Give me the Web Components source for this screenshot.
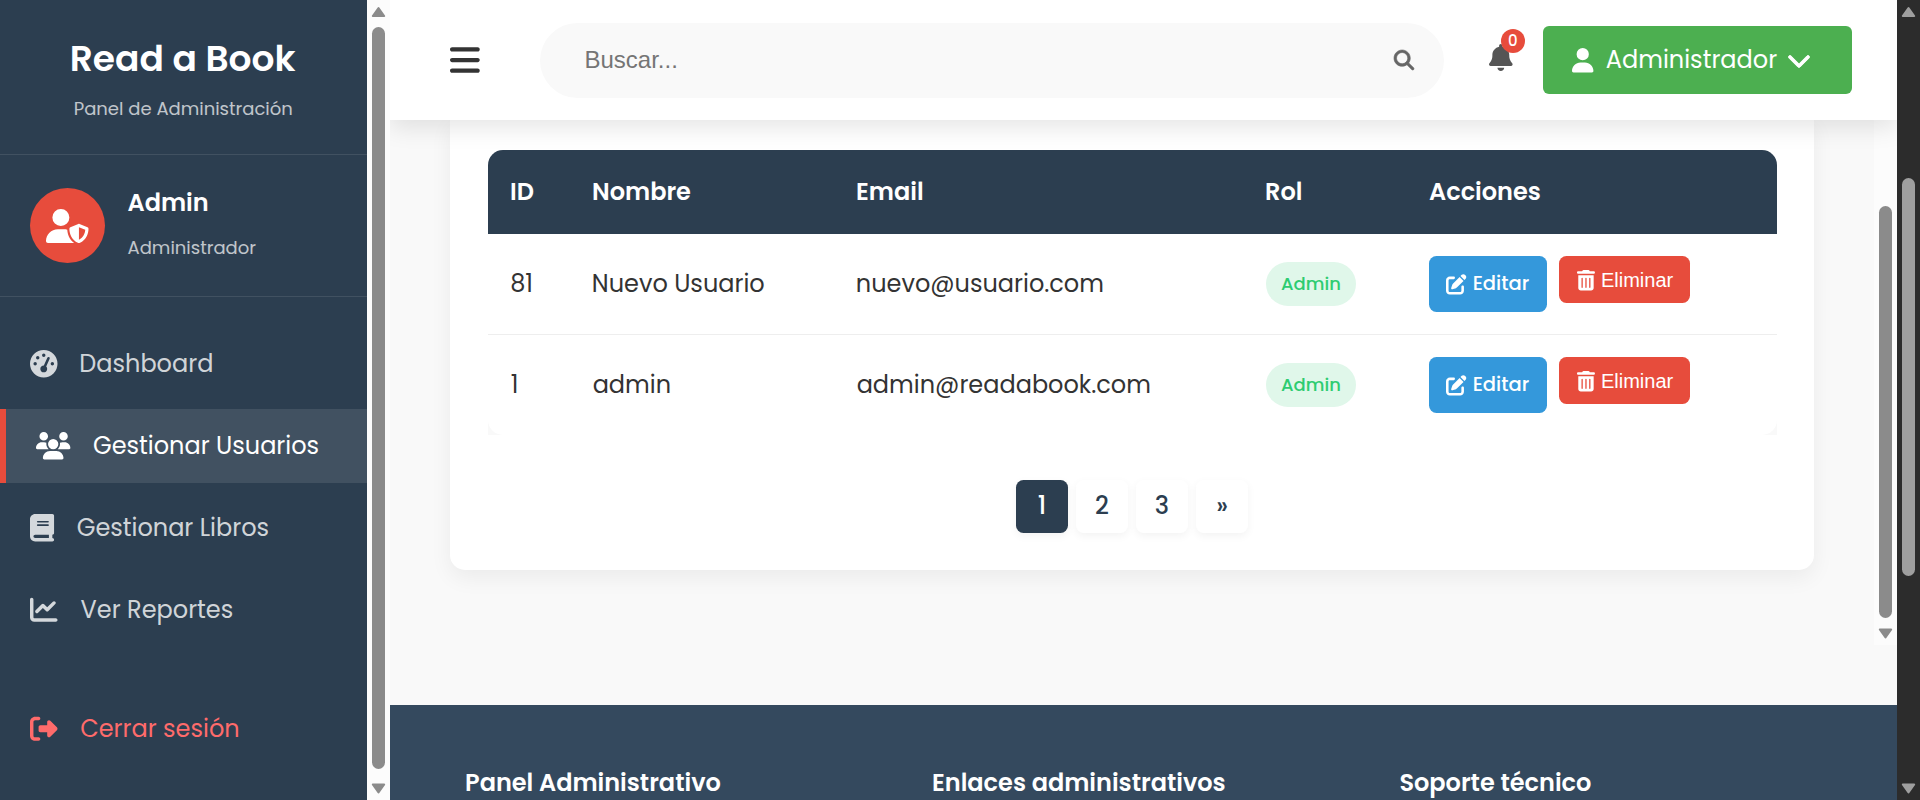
<!DOCTYPE html>
<html lang="es">
<head>
<meta charset="utf-8">
<title>Read a Book - Gestionar Usuarios</title>
<style>
html,body{margin:0;height:100%;overflow:hidden}
body{font-family:Poppins,Inter,"Open Sans",sans-serif;font-size:24px;color:#333;background:#f9f9f9}
</style>
</head>
<body>
<admin-app></admin-app>
<script>
const ICONS={
shield:[640,'M224 256A128 128 0 1 0 224 0a128 128 0 1 0 0 256zm-45.7 48C79.8 304 0 383.8 0 482.3C0 498.7 13.3 512 29.7 512H418.3c1.8 0 3.5-.2 5.3-.5c-76.3-55.1-99.8-141-103.1-200.2c-16.1-4.8-33.1-7.3-50.7-7.3H178.3zm308.8-78.3l-120 48C358 277.4 352 286.2 352 296c0 63.3 25.9 168.8 134.8 214.2c5.9 2.5 12.6 2.5 18.5 0C614.1 464.8 640 359.3 640 296c0-9.8-6-18.6-15.1-22.3l-120-48c-5.7-2.3-12.1-2.3-17.8 0zM591.4 312c-3.9 50.7-27.2 116.7-95.4 149.7V273.8L591.4 312z'],
gauge:[512,'M0 256a256 256 0 1 1 512 0A256 256 0 1 1 0 256zM288 96a32 32 0 1 0 -64 0 32 32 0 1 0 64 0zM256 416c35.3 0 64-28.7 64-64c0-17.4-6.9-33.1-18.1-44.6L366 161.7c5.3-12.1-.2-26.3-12.3-31.6s-26.3 .2-31.6 12.3L257.9 288c-.6 0-1.3 0-1.9 0c-35.3 0-64 28.7-64 64s28.7 64 64 64zM176 144a32 32 0 1 0 -64 0 32 32 0 1 0 64 0zM96 288a32 32 0 1 0 0-64 32 32 0 1 0 0 64zm352-32a32 32 0 1 0 -64 0 32 32 0 1 0 64 0z'],
users:[640,'M144 0a80 80 0 1 1 0 160A80 80 0 1 1 144 0zM512 0a80 80 0 1 1 0 160A80 80 0 1 1 512 0zM0 298.7C0 239.8 47.8 192 106.7 192h42.7c15.9 0 31 3.5 44.6 9.7c-1.3 7.2-1.9 14.7-1.9 22.3c0 38.2 16.8 72.5 43.3 96c-.2 0-.4 0-.7 0H21.3C9.6 320 0 310.4 0 298.7zM405.3 320c-.2 0-.4 0-.7 0c26.6-23.5 43.3-57.8 43.3-96c0-7.6-.7-15-1.9-22.3c13.6-6.3 28.7-9.7 44.6-9.7h42.7C592.2 192 640 239.8 640 298.7c0 11.8-9.6 21.3-21.3 21.3H405.3zM224 224a96 96 0 1 1 192 0 96 96 0 1 1 -192 0zM128 485.3C128 411.7 187.7 352 261.3 352H378.7C452.3 352 512 411.7 512 485.3c0 14.7-11.9 26.7-26.7 26.7H154.7c-14.7 0-26.7-11.9-26.7-26.7z'],
book:[448,'M96 0C43 0 0 43 0 96V416c0 53 43 96 96 96H384h32c17.7 0 32-14.3 32-32s-14.3-32-32-32V384c17.7 0 32-14.3 32-32V32c0-17.7-14.3-32-32-32H384 96zm0 384H352v64H96c-17.7 0-32-14.3-32-32s14.3-32 32-32zm32-240c0-8.8 7.2-16 16-16H336c8.8 0 16 7.2 16 16s-7.2 16-16 16H144c-8.8 0-16-7.2-16-16zm16 48H336c8.8 0 16 7.2 16 16s-7.2 16-16 16H144c-8.8 0-16-7.2-16-16s7.2-16 16-16z'],
chart:[512,'M64 64c0-17.7-14.3-32-32-32S0 46.3 0 64V400c0 44.2 35.8 80 80 80H480c17.7 0 32-14.3 32-32s-14.3-32-32-32H80c-8.8 0-16-7.2-16-16V64zm406.6 86.6c12.5-12.5 12.5-32.8 0-45.3s-32.8-12.5-45.3 0L320 210.7l-57.4-57.4c-12.5-12.5-32.8-12.5-45.3 0l-112 112c-12.5 12.5-12.5 32.8 0 45.3s32.8 12.5 45.3 0L240 221.3l57.4 57.4c12.5 12.5 32.8 12.5 45.3 0l128-128z'],
exit:[512,'M377.9 105.9L500.7 228.7c7.2 7.2 11.3 17.1 11.3 27.3s-4.1 20.1-11.3 27.3L377.9 406.1c-6.4 6.4-15 9.9-24 9.9c-18.7 0-33.9-15.2-33.9-33.9l0-62.1-128 0c-17.7 0-32-14.3-32-32l0-64c0-17.7 14.3-32 32-32l128 0 0-62.1c0-18.7 15.2-33.9 33.9-33.9c9 0 17.6 3.6 24 9.9zM160 96L96 96c-17.7 0-32 14.3-32 32l0 256c0 17.7 14.3 32 32 32l64 0c17.7 0 32 14.3 32 32s-14.3 32-32 32l-64 0c-53 0-96-43-96-96L0 128C0 75 43 32 96 32l64 0c17.7 0 32 14.3 32 32s-14.3 32-32 32z'],
bars:[448,'M0 96C0 78.3 14.3 64 32 64H416c17.7 0 32 14.3 32 32s-14.3 32-32 32H32C14.3 128 0 113.7 0 96zM0 256c0-17.7 14.3-32 32-32H416c17.7 0 32 14.3 32 32s-14.3 32-32 32H32c-17.7 0-32-14.3-32-32zM448 416c0 17.7-14.3 32-32 32H32c-17.7 0-32-14.3-32-32s14.3-32 32-32H416c17.7 0 32 14.3 32 32z'],
search:[512,'M416 208c0 45.9-14.9 88.3-40 122.7L502.6 457.4c12.5 12.5 12.5 32.8 0 45.3s-32.8 12.5-45.3 0L330.7 376c-34.4 25.2-76.8 40-122.7 40C93.1 416 0 322.9 0 208S93.1 0 208 0S416 93.1 416 208zM208 352a144 144 0 1 0 0-288 144 144 0 1 0 0 288z'],
bell:[448,'M224 0c-17.7 0-32 14.3-32 32V51.2C119 66 64 130.6 64 208v18.8c0 47-17.3 92.4-48.5 127.6l-7.4 8.3c-8.4 9.4-10.4 22.9-5.3 34.4S19.4 416 32 416H416c12.6 0 24-7.4 29.2-18.9s3.1-25-5.3-34.4l-7.4-8.3C401.3 319.2 384 273.9 384 226.8V208c0-77.4-55-142-128-156.8V32c0-17.7-14.3-32-32-32zm45.3 493.3c12-12 18.7-28.3 18.7-45.3H224 160c0 17 6.7 33.3 18.7 45.3s28.3 18.7 45.3 18.7s33.3-6.7 45.3-18.7z'],
user:[448,'M224 256A128 128 0 1 0 224 0a128 128 0 1 0 0 256zm-45.7 48C79.8 304 0 383.8 0 482.3C0 498.7 13.3 512 29.7 512H418.3c16.4 0 29.7-13.3 29.7-29.7C448 383.8 368.2 304 269.7 304H178.3z'],
chevron:[512,'M233.4 406.6c12.5 12.5 32.8 12.5 45.3 0l192-192c12.5-12.5 12.5-32.8 0-45.3s-32.8-12.5-45.3 0L256 338.7 86.6 169.4c-12.5-12.5-32.8-12.5-45.3 0s-12.5 32.8 0 45.3l192 192z'],
edit:[512,'M471.6 21.7c-21.9-21.9-57.3-21.9-79.2 0L362.3 51.7l97.9 97.9 30.1-30.1c21.9-21.9 21.9-57.3 0-79.2L471.6 21.7zm-299.2 220c-6.1 6.1-10.8 13.6-13.5 21.9l-29.6 88.8c-2.9 8.6-.6 18.1 5.8 24.6s15.9 8.7 24.6 5.8l88.8-29.6c8.2-2.7 15.7-7.4 21.9-13.5L437.7 172.3 339.7 74.3 172.4 241.7zM96 64C43 64 0 107 0 160V416c0 53 43 96 96 96H352c53 0 96-43 96-96V320c0-17.7-14.3-32-32-32s-32 14.3-32 32v96c0 17.7-14.3 32-32 32H96c-17.7 0-32-14.3-32-32V160c0-17.7 14.3-32 32-32h96c17.7 0 32-14.3 32-32s-14.3-32-32-32H96z'],
trash:[448,'M135.2 17.7C140.6 6.8 151.7 0 163.8 0H284.2c12.1 0 23.2 6.8 28.6 17.7L320 32h96c17.7 0 32 14.3 32 32s-14.3 32-32 32H32C14.3 96 0 81.7 0 64S14.3 32 32 32h96l7.2-14.3zM32 128H416V448c0 35.3-28.7 64-64 64H96c-35.3 0-64-28.7-64-64V128zm96 64c-8.8 0-16 7.2-16 16V432c0 8.8 7.2 16 16 16s16-7.2 16-16V208c0-8.8-7.2-16-16-16zm96 0c-8.8 0-16 7.2-16 16V432c0 8.8 7.2 16 16 16s16-7.2 16-16V208c0-8.8-7.2-16-16-16zm96 0c-8.8 0-16 7.2-16 16V432c0 8.8 7.2 16 16 16s16-7.2 16-16V208c0-8.8-7.2-16-16-16z']
};
function define(name,html,setup){
  customElements.define(name,class extends HTMLElement{
    connectedCallback(){
      if(this.shadowRoot)return;
      this.attachShadow({mode:'open'}).innerHTML=typeof html==='function'?html(this):html;
      if(setup)setup(this);
    }
  });
}
/* Glyph icon; size is the em height, bold thickens the strokes */
define('fa-icon',el=>{
  const [w,d]=ICONS[el.getAttribute('name')],s=+el.getAttribute('size'),b=el.getAttribute('bold')||0;
  return `<style>:host{display:block;flex:none;line-height:0}svg{display:block;fill:currentColor;stroke:currentColor;overflow:visible}</style><svg width="${w*s/512}" height="${s}" viewBox="0 0 ${w} 512" stroke-width="${b}"><path d="${d}"/></svg>`;
});
/* One line of text, optically aligned to its left edge, in a box w pixels wide */
const ctx=document.createElement('canvas').getContext('2d');
define('fit-text','<style>:host{display:block;flex:none;white-space:nowrap;line-height:36px}</style><slot></slot>',el=>{
  const cs=getComputedStyle(el),k=parseFloat(cs.fontSize)/200;
  ctx.font=`${cs.fontWeight} 200px ${cs.fontFamily}`;
  el.style.width=el.getAttribute('w')+'px';
  el.style.textIndent=ctx.measureText(el.textContent).actualBoundingBoxLeft*k+.6+'px';
});
/* Scroll bar with rounded thumb and end arrows */
define('scroll-bar',el=>`<style>
:host{display:flex;flex-direction:column;align-items:center;box-sizing:border-box;width:23px;background:var(--track,#fcfcfc);color:var(--thumb,#8b8b8b)}
svg{display:block;fill:currentColor;stroke:currentColor;stroke-width:2;stroke-linejoin:round;flex:none}
i{width:13px;border-radius:7px;background:currentColor;flex:none;margin-top:${el.getAttribute('before')}px;height:${el.getAttribute('length')}px}
.d{margin-top:auto;margin-bottom:6px}.u{margin-top:6px}
</style>${el.hasAttribute('noup')?'':'<svg class="u" width="15" height="11"><path d="M7.5 2L13.2 10H1.8z"/></svg>'}<i></i><svg class="d" width="15" height="11"><path d="M7.5 9.500L13.200 1.500H1.800z"/></svg>`);

define('nav-item',el=>`<style>
:host{display:flex;align-items:center;height:74px;margin-bottom:8px;padding-left:30px;color:rgba(255,255,255,.8);box-sizing:border-box}
:host([active]){background:rgba(255,255,255,.1);border-left:6px solid #e74c3c;color:#fff}
fa-icon{margin-right:23px}
</style><fa-icon name="${el.getAttribute('icon')}" size="27.500"></fa-icon><slot></slot>`);

define('side-bar',`<style>
:host{display:block;background:#2c3e50;color:#fff;overflow:hidden}
.brand{height:155px;box-sizing:border-box;padding:37px 0 0;border-bottom:1px solid rgba(255,255,255,.1);display:flex;flex-direction:column;align-items:center}
.brand .n{font-size:36px;font-weight:600;line-height:43px}
.brand .s{font-size:18px;margin-top:11px;opacity:.7}
.me{height:142px;box-sizing:border-box;padding-left:30px;display:flex;align-items:center;border-bottom:1px solid rgba(255,255,255,.1)}
.av{width:75px;height:75px;border-radius:50%;background:#e74c3c;display:flex;align-items:center;justify-content:center;margin-right:22.500px}
.me .n{font-weight:600;margin-bottom:9px}
.me .r{font-size:18px;opacity:.7}
nav{padding-top:30px}
.out{margin-top:45px;color:#ff6b6b}
</style>
<div class="brand"><fit-text class="n" w="224">Read a Book</fit-text><fit-text class="s" w="218">Panel de Administración</fit-text></div>
<div class="me"><div class="av"><fa-icon name="shield" size="34"></fa-icon></div><div><fit-text class="n" w="80">Admin</fit-text><fit-text class="r" w="128">Administrador</fit-text></div></div>
<nav>
<nav-item icon="gauge"><fit-text w="132">Dashboard</fit-text></nav-item>
<nav-item icon="users" active><fit-text w="225">Gestionar Usuarios</fit-text></nav-item>
<nav-item icon="book"><fit-text w="191">Gestionar Libros</fit-text></nav-item>
<nav-item icon="chart"><fit-text w="151">Ver Reportes</fit-text></nav-item>
<nav-item class="out" icon="exit"><fit-text w="158">Cerrar sesión</fit-text></nav-item>
</nav>`);

define('top-bar',`<style>
:host{display:flex;align-items:center;box-sizing:border-box;height:120px;padding:0 45px 0 60px;background:#fff;box-shadow:0 7.5px 22.5px rgba(0,0,0,.1);position:relative;z-index:2}
.search{width:904px;height:75px;margin-left:60px;box-sizing:border-box;padding:0 30px 0 46px;border-radius:38px;background:#f9f9f9;display:flex;align-items:center;justify-content:space-between;color:#757575;font:24px "Liberation Sans",Arial,sans-serif}
.search fa-icon{color:#666}
.bell{position:relative;margin-left:45px;color:#555;top:-2.5px}
.bell b{position:absolute;left:12px;top:-15px;width:24px;height:24px;border-radius:50%;background:#e74c3c;color:#fff;font-size:15px;font-weight:500;line-height:24px;text-align:center}
.user{margin-left:auto;width:309px;height:68px;box-sizing:border-box;padding-left:29px;border-radius:6px;background:#4caf50;color:#fff;display:flex;align-items:center}
.user fit-text{margin:0 11px 0 12.500px}
</style>
<fa-icon name="bars" size="34" style="color:#333"></fa-icon>
<div class="search"><fit-text w="91">Buscar...</fit-text><fa-icon name="search" size="20" bold="16"></fa-icon></div>
<div class="bell"><fa-icon name="bell" size="27"></fa-icon><b>0</b></div>
<div class="user"><fa-icon name="user" size="24.500"></fa-icon><fit-text w="170.500">Administrador</fit-text><fa-icon name="chevron" size="24" bold="20"></fa-icon></div>`);

define('action-button',`<style>
:host{display:flex;align-items:center;box-sizing:border-box;height:55.500px;padding-left:17px;width:118px;border-radius:7.500px;background:#3498db;color:#fff;font-size:19.500px;font-weight:500;gap:7px}
:host([danger]){height:47px;width:131px;background:#e74c3c;font:20px "Liberation Sans",Arial,sans-serif;padding-left:18px}
</style><slot></slot>`);
define('user-row',el=>{
  const g=a=>el.getAttribute(a);
  const c=(a,w)=>`<div><fit-text w="${g(w)}">${g(a)}</fit-text></div>`;
  return `<style>
:host{display:grid;grid-template-columns:82px 264px 409px 163px 1fr;align-items:center;height:101px;box-sizing:border-box;border-bottom:1px solid #eee;background:#fff}
:host(:last-of-type){border-bottom:0;height:100px}
div{padding-left:23px}
.tag{display:flex;width:90px;height:44px;box-sizing:border-box;padding-left:15px;align-items:center;border-radius:22px;background:#e0f7ea;color:#2ecc71;font-size:18px;font-weight:500}
.act{display:flex;gap:12px;align-items:flex-start}
</style>${c('uid','w1')}${c('name','w2')}${c('email','w3')}<div><span class="tag"><fit-text w="59">Admin</fit-text></span></div>
<div class="act"><action-button><fa-icon name="edit" size="20.500"></fa-icon><fit-text w="54">Editar</fit-text></action-button><action-button danger><fa-icon name="trash" size="20.500"></fa-icon><fit-text w="69.500">Eliminar</fit-text></action-button></div>`;
});
define('user-table',`<style>
:host{display:block;border-radius:15px 15px 0 0;overflow:hidden;background:#f9f9f9}
.h{display:grid;grid-template-columns:82px 264px 409px 163px 1fr;align-items:center;height:84px;background:#2c3e50;color:#fff;font-weight:600}
.h div{padding-left:23px}
.b{border-radius:0 0 15px 15px;overflow:hidden}
</style><div class="h"><div><fit-text w="22">ID</fit-text></div><div><fit-text w="97">Nombre</fit-text></div><div><fit-text w="65">Email</fit-text></div><div><fit-text w="36">Rol</fit-text></div><div><fit-text w="110">Acciones</fit-text></div></div><div class="b"><slot></slot></div>`);
define('page-nav',`<style>
:host{display:flex;justify-content:center;gap:8px;padding-right:1px}
a{width:52px;height:53px;border-radius:7.500px;background:#fff;color:#2c3e50;box-shadow:0 3px 8px rgba(0,0,0,.05);font-weight:500;line-height:52px;text-align:center}
a.on{background:#2c3e50;color:#fff}
</style><a class="on">1</a><a>2</a><a>3</a><a>»</a>`);
define('content-card',`<style>
:host{display:block;box-sizing:border-box;width:1364px;height:450px;padding:30px 37px 0 38px;margin-left:60px;border-radius:0 0 15px 15px;background:#fff;box-shadow:0 7.5px 22.500px rgba(0,0,0,.06)}
page-nav{margin-top:45px}
</style><user-table>
<user-row uid="81" w1="22" name="Nuevo Usuario" w2="172" email="nuevo@usuario.com" w3="246"></user-row>
<user-row uid="1" w1="8" name="admin" w2="78" email="admin@readabook.com" w3="293"></user-row>
</user-table><page-nav></page-nav>`);
define('page-footer',`<style>
:host{display:grid;grid-template-columns:467px 467px 1fr;padding:60px 0 0 76px;background:#34495e;color:#fff;font-weight:600;height:95px;box-sizing:border-box;overflow:hidden}
</style><fit-text w="254">Panel Administrativo</fit-text><fit-text w="292">Enlaces administrativos</fit-text><fit-text w="191">Soporte técnico</fit-text>`);
define('admin-app',`<style>
:host{display:grid;grid-template-columns:367px 23px 1fr 23px;height:800px}
main{display:flex;flex-direction:column;min-width:0;overflow:hidden;background:#f9f9f9}
.c{height:585px;display:flex;justify-content:space-between;align-items:flex-start}
.c scroll-bar{height:525px}
</style><side-bar></side-bar><scroll-bar before="10" length="742"></scroll-bar>
<main><top-bar></top-bar><div class="c"><content-card></content-card><scroll-bar noup before="86" length="412"></scroll-bar></div><page-footer></page-footer></main>
<scroll-bar before="161" length="398" style="--track:#2c2c2c;--thumb:#9f9f9f"></scroll-bar>`);
</script>
</body>
</html>
